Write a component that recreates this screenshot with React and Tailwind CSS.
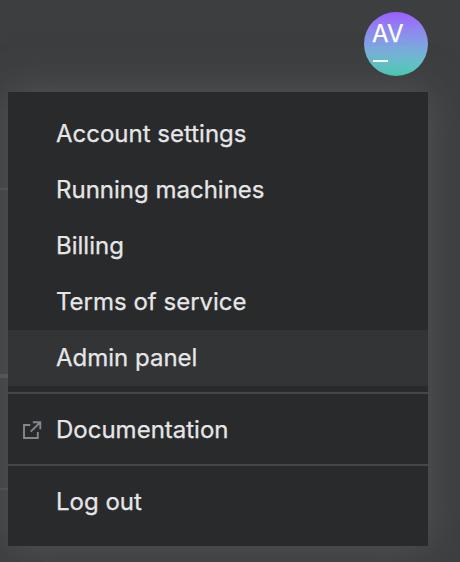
const accountLinks = [
  { label: "Account settings" },
  { label: "Running machines" },
  { label: "Billing" },
  { label: "Terms of service" },
  { label: "Admin panel", active: true },
];

function MenuItem({ label, active, icon }) {
  return (
    <a
      className={`flex h-14 items-center ${active ? "bg-[#333436]" : ""}`}
    >
      <span className="flex w-12 shrink-0 pl-[14px]">{icon}</span>
      <span className="whitespace-nowrap [-webkit-text-stroke:0.25px_#e6e6e7]">{label}</span>
    </a>
  );
}

function ExternalIcon() {
  return (
    <svg width="20" height="20" viewBox="0 0 20 20" fill="none" stroke="#85868f" strokeWidth="1.9">
      <path d="M8.3 5H2V18H15.8V12M10.8 2.2H18.3V9.2M18.3 2.2L8.7 11.6" />
    </svg>
  );
}

export default function App() {
  return (
    <div className="flex h-[562px] w-[460px] flex-col overflow-hidden bg-[#3d3e40] pt-3 font-['Inter',sans-serif] text-[24px] text-[#e6e6e7]">
      <div className="flex h-20 justify-end pr-8">
        <div className="h-16 w-16 rounded-full bg-linear-to-b from-[#9b5cff] to-[#44d8bd] pl-[8px] pt-[7px] leading-[29px] text-white [-webkit-text-stroke:0.25px_white]">
          <div>AV</div>
          <div className="mt-3 ml-px h-0.5 w-[15px] bg-white" />
        </div>
      </div>
      <div className="flex">
        <div className="flex h-[454px] w-2 shrink-0 flex-col">
          <div className="h-24" />
          <div className="h-0.5 bg-[#4b4c4e]" />
          <div className="h-[184px]" />
          <div className="h-1 bg-[#505153]" />
          <div className="h-[110px]" />
          <div className="h-0.5 bg-[#4b4c4e]" />
        </div>
        <nav className="h-[454px] w-[420px] bg-[#292a2c] pt-[14px] shadow-[0_0_40px_rgba(94,95,97,0.7)]">
          {accountLinks.map((item) => (
            <MenuItem key={item.label} {...item} />
          ))}
          <div className="mt-1.5 border-y-2 border-[#464749] pt-2 pb-1.5">
            <MenuItem label="Documentation" icon={<ExternalIcon />} />
          </div>
          <div className="pt-2">
            <MenuItem label="Log out" />
          </div>
        </nav>
      </div>
    </div>
  );
}
